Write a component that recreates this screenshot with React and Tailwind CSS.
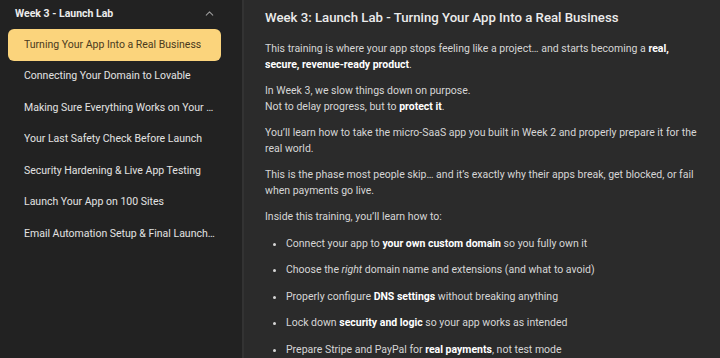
import { ChevronUp } from 'lucide-react';

const lessons = [
    'Turning Your App Into a Real Business',
    'Connecting Your Domain to Lovable',
    'Making Sure Everything Works on Your Website',
    'Your Last Safety Check Before Launch',
    'Security Hardening & Live App Testing',
    'Launch Your App on 100 Sites',
    'Email Automation Setup & Final Launch Checklist',
];

export default function App() {
    return (
        <div className="flex h-[358px] w-[720px] overflow-hidden bg-[#2b2b2b] font-['Roboto',sans-serif] text-[#d6d6d6]">
            {/* Sidebar */}
            <aside className="w-[244px] shrink-0 border-r-2 border-[#333333] bg-[#222222]">
                <div className="flex h-[27px] items-center justify-between pl-[15px] pr-[26px]">
                    <span className="text-[10.5px] font-bold text-[#ececec]">Week 3 - Launch Lab</span>
                    <ChevronUp size={13} strokeWidth={2} className="text-[#9a9a9a]" />
                </div>
                <ul className="mt-[2px] mr-[21px] ml-[8px] flex flex-col">
                    {lessons.map((title, i) => (
                        <li
                            key={title}
                            className={`flex h-[31.5px] items-center rounded-[6px] pl-[16px] pr-[6px] text-[10.5px] ${i === 0 ? 'bg-[#fbd47c] text-[#4a3a1c]' : 'text-[#e2e2e2]'}`}
                        >
                            <span className="truncate">{title}</span>
                        </li>
                    ))}
                </ul>
            </aside>

            {/* Main content */}
            <main className="flex-1 pl-[21px] pr-[20px] pt-[8px] text-[10.5px] leading-[15.5px]">
                <h1 className="mb-[13px] text-[13.2px] font-medium leading-[20px] text-[#ececec]">
                    Week 3: Launch Lab - Turning Your App Into a Real Business
                </h1>
                <p className="mb-[11px]">
                    This training is where your app stops feeling like a project… and starts becoming a <strong className="font-bold text-white">real, secure, revenue-ready product</strong>.
                </p>
                <p className="mb-[11px]">
                    In Week 3, we slow things down on purpose.<br />
                    Not to delay progress, but to <strong className="font-bold text-white">protect it</strong>.
                </p>
                <p className="mb-[11px]">
                    You’ll learn how to take the micro-SaaS app you built in Week 2 and properly prepare it for the real world.
                </p>
                <p className="mb-[11px]">
                    This is the phase most people skip… and it’s exactly why their apps break, get blocked, or fail when payments go live.
                </p>
                <p className="mb-[11px]">Inside this training, you’ll learn how to:</p>
                <ul className="list-disc pl-[21px] marker:text-[#d6d6d6]">
                    <li className="mb-[11px]">Connect your app to <strong className="font-bold text-white">your own custom domain</strong> so you fully own it</li>
                    <li className="mb-[11px]">Choose the <em>right</em> domain name and extensions (and what to avoid)</li>
                    <li className="mb-[11px]">Properly configure <strong className="font-bold text-white">DNS settings</strong> without breaking anything</li>
                    <li className="mb-[11px]">Lock down <strong className="font-bold text-white">security and logic</strong> so your app works as intended</li>
                    <li className="mb-[11px]">Prepare Stripe and PayPal for <strong className="font-bold text-white">real payments</strong>, not test mode</li>
                </ul>
            </main>
        </div>
    );
}
